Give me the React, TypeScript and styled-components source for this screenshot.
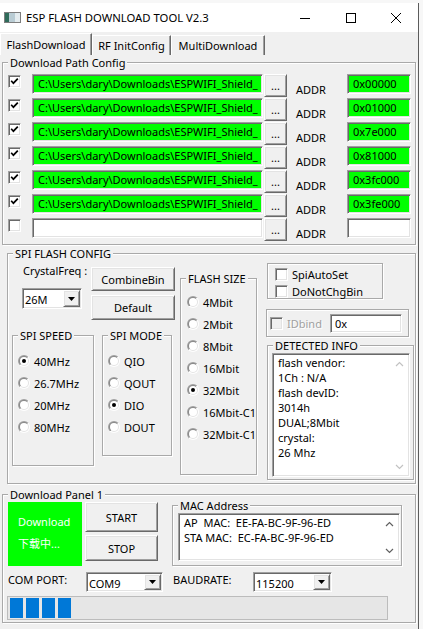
import React from 'react';
import styled, { createGlobalStyle, css } from 'styled-components';

const Global = createGlobalStyle`
  html, body { margin: 0; padding: 0; }
  body {
    background: #f6f6f6;
    font-family: "Noto Sans", "Noto Sans CJK SC", "Liberation Sans", sans-serif;
    font-size: 11px;
    color: #000;
  }
  * { box-sizing: border-box; }
`;

const sunken = css`
  border: 1px solid;
  border-color: #a0a0a0 #ffffff #ffffff #a0a0a0;
  box-shadow: inset 1px 1px 0 #696969, inset -1px -1px 0 #e3e3e3;
`;

const raised = css`
  border: 1px solid;
  border-color: #ffffff #696969 #696969 #ffffff;
  box-shadow: inset 1px 1px 0 #e3e3e3, inset -1px -1px 0 #a0a0a0;
  background: #f0f0f0;
`;

const Screen = styled.div`
  width: 423px;
  height: 629px;
  overflow: hidden;
  padding-top: 3px;
  background: #f7f7f7;
`;

const Window = styled.div`
  width: 419px;
  height: 626px;
  background: #f0f0f0;
  border-right: 1px solid #5c5c5c;
  display: flex;
  flex-direction: column;
`;

const TitleBar = styled.div`
  height: 29px;
  flex: none;
  background: #ffffff;
  display: flex;
  align-items: center;
`;

const AppIcon = styled.svg`
  margin-left: 4px;
  flex: none;
`;

const Title = styled.span`
  margin-left: 5px;
  font-size: 11.3px;
  white-space: nowrap;
`;

const Controls = styled.div`
  margin-left: auto;
  display: flex;
  height: 100%;
`;

const CtrlBtn = styled.div<{ $w: number }>`
  width: ${p => p.$w}px;
  height: 100%;
  display: flex;
  align-items: center;
  justify-content: center;
`;

const TabBar = styled.div`
  height: 23px;
  flex: none;
  display: flex;
  align-items: flex-end;
`;

const Tab = styled.div<{ $w: number; $active?: boolean }>`
  width: ${p => p.$w}px;
  height: ${p => (p.$active ? 22 : 20)}px;
  border-top: 1px solid #ffffff;
  border-left: 1px solid #ffffff;
  border-right: 1px solid #696969;
  box-shadow: inset -1px 0 0 #a0a0a0;
  background: #f0f0f0;
  display: flex;
  align-items: center;
  justify-content: center;
  padding-bottom: ${p => (p.$active ? 0 : 0)}px;
  white-space: nowrap;
  margin-top: ${p => (p.$active ? 0 : 2)}px;
`;

const Page = styled.div`
  flex: 1;
  display: flex;
  flex-direction: column;
  align-items: flex-start;
`;

const Group = styled.div<{ $w: number; $h: number; $mt?: number; $ml?: number }>`
  position: relative;
  flex: none;
  width: ${p => p.$w}px;
  height: ${p => p.$h}px;
  margin-top: ${p => p.$mt ?? 0}px;
  margin-left: ${p => p.$ml ?? 0}px;
  border: 1px solid #a9a9a9;
  box-shadow: inset 1px 1px 0 #ffffff, 1px 1px 0 #ffffff;
`;

const Legend = styled.span`
  position: absolute;
  top: -8px;
  left: 5px;
  padding: 0 2px;
  background: #f0f0f0;
  line-height: 15px;
  white-space: nowrap;
`;

const Field = styled.div<{ $w: number; $h: number; $bg?: string; $pl?: number; $ml?: number }>`
  ${sunken};
  flex: none;
  width: ${p => p.$w}px;
  height: ${p => p.$h}px;
  margin-left: ${p => p.$ml ?? 0}px;
  background: ${p => p.$bg ?? '#ffffff'};
  padding-left: ${p => p.$pl ?? 5}px;
  line-height: ${p => p.$h - 2}px;
  white-space: nowrap;
  overflow: hidden;
`;

const Button = styled.button<{ $w: number; $h: number; $ml?: number; $mt?: number }>`
  ${raised};
  flex: none;
  width: ${p => p.$w}px;
  height: ${p => p.$h}px;
  margin: ${p => p.$mt ?? 0}px 0 0 ${p => p.$ml ?? 0}px;
  padding: 0;
  font: inherit;
  color: #000;
  display: flex;
  align-items: center;
  justify-content: center;
`;

const Box = styled.span<{ $checked?: boolean; $disabled?: boolean; $mt?: number }>`
  ${sunken};
  flex: none;
  width: 13px;
  height: 13px;
  margin-top: ${p => p.$mt ?? 0}px;
  background: ${p => (p.$disabled ? '#f0f0f0' : '#ffffff')};
  display: flex;
  align-items: center;
  justify-content: center;
`;

const CheckBox = ({ checked, disabled, mt }: { checked?: boolean; disabled?: boolean; mt?: number }) => (
  <Box $checked={checked} $disabled={disabled} $mt={mt}>
    {checked && (
      <svg width="9" height="9" viewBox="0 0 9 9">
        <path d="M1.2 3.8 L3.4 6.2 L7.8 1.6" fill="none" stroke="#000" strokeWidth="1.7" />
      </svg>
    )}
  </Box>
);

const RadioOuter = styled.span`
  flex: none;
  width: 12px;
  height: 12px;
  border-radius: 50%;
  padding: 1px;
  background: linear-gradient(135deg, #a0a0a0 50%, #ffffff 50%);
`;
const RadioMid = styled.span`
  display: block;
  width: 100%;
  height: 100%;
  border-radius: 50%;
  padding: 1px;
  background: linear-gradient(135deg, #8a8a8a 50%, #e3e3e3 50%);
`;
const RadioInner = styled.span`
  width: 100%;
  height: 100%;
  border-radius: 50%;
  background: #ffffff;
  display: flex;
  align-items: center;
  justify-content: center;
`;
const Dot = styled.span`
  width: 4px;
  height: 4px;
  border-radius: 50%;
  background: #000;
`;

const Radio = ({ checked }: { checked?: boolean }) => (
  <RadioOuter>
    <RadioMid>
      <RadioInner>{checked && <Dot />}</RadioInner>
    </RadioMid>
  </RadioOuter>
);

const PathList = styled.div`
  padding: 11px 0 0 5px;
  display: flex;
  flex-direction: column;
`;

const PathRow = styled.div`
  display: flex;
  align-items: flex-start;
  height: 24px;
`;

const AddrLabel = styled.span`
  flex: none;
  width: 51px;
  margin: 8px 0 0 9px;
  line-height: 15px;
`;

const SpiBody = styled.div`
  display: flex;
  align-items: flex-start;
`;

const ColA = styled.div`
  margin-left: 4px;
  padding-top: 9px;
  width: 163px;
  flex: none;
  display: flex;
  flex-direction: column;
`;

const TopRow = styled.div`
  display: flex;
  align-items: flex-start;
`;

const CrystalBlock = styled.div`
  margin-left: 10px;
  width: 69px;
  display: flex;
  flex-direction: column;
`;

const Label = styled.span<{ $ml?: number; $w?: number; $color?: string }>`
  flex: none;
  line-height: 15px;
  margin-left: ${p => p.$ml ?? 0}px;
  width: ${p => (p.$w ? `${p.$w}px` : 'auto')};
  color: ${p => p.$color ?? '#000'};
  white-space: nowrap;
`;

const ComboBox = styled.div<{ $w: number; $h: number; $mt?: number; $ml?: number }>`
  ${sunken};
  flex: none;
  width: ${p => p.$w}px;
  height: ${p => p.$h}px;
  margin-top: ${p => p.$mt ?? 0}px;
  margin-left: ${p => p.$ml ?? 0}px;
  background: #ffffff;
  display: flex;
  align-items: center;
  padding: 0 1px 0 2px;
`;

const ComboText = styled.span`
  flex: 1;
  padding-top: 2px;
  white-space: nowrap;
`;

const DropBtn = styled.span`
  ${raised};
  width: 17px;
  height: calc(100% - 2px);
  display: flex;
  align-items: center;
  justify-content: center;
`;

const Combo = ({ text, w, h, mt, ml }: { text: string; w: number; h: number; mt?: number; ml?: number }) => (
  <ComboBox $w={w} $h={h} $mt={mt} $ml={ml}>
    <ComboText>{text}</ComboText>
    <DropBtn>
      <svg width="7" height="4" viewBox="0 0 7 4">
        <path d="M0 0 H7 L3.5 4 Z" fill="#000" />
      </svg>
    </DropBtn>
  </ComboBox>
);

const BtnCol = styled.div<{ $mt?: number; $ml?: number }>`
  display: flex;
  flex-direction: column;
  margin-top: ${p => p.$mt ?? 0}px;
  margin-left: ${p => p.$ml ?? 0}px;
  flex: none;
`;

const BottomRow = styled.div`
  margin-top: 15px;
  display: flex;
  align-items: flex-start;
  gap: 8px;
`;

const RadioList = styled.div<{ $pt: number; $pl: number }>`
  padding: ${p => p.$pt}px 0 0 ${p => p.$pl}px;
  display: flex;
  flex-direction: column;
`;

const RadioRow = styled.div`
  height: 22px;
  display: flex;
  align-items: center;
  gap: 4px;
  white-space: nowrap;
`;

const ColC = styled.div`
  margin-left: 9px;
  margin-top: 9px;
  display: flex;
  flex-direction: column;
  align-items: flex-start;
`;

const Panel = styled.div<{ $w: number; $h: number; $mt?: number; $ml?: number }>`
  flex: none;
  width: ${p => p.$w}px;
  height: ${p => p.$h}px;
  margin-top: ${p => p.$mt ?? 0}px;
  margin-left: ${p => p.$ml ?? 0}px;
  border: 1px solid #a9a9a9;
  box-shadow: inset 1px 1px 0 #ffffff, 1px 1px 0 #ffffff;
`;

const OptList = styled.div`
  padding: 2px 0 0 7px;
  display: flex;
  flex-direction: column;
`;

const OptRow = styled.div`
  height: 17px;
  display: flex;
  align-items: center;
  gap: 4px;
  white-space: nowrap;
`;

const IdRow = styled.div`
  height: 100%;
  display: flex;
  align-items: center;
  padding-left: 3px;
`;

const DisabledText = styled.span`
  margin-left: 4px;
  width: 43px;
  flex: none;
  color: #a0a0a0;
  text-shadow: 1px 1px 0 #ffffff;
`;

const TextArea = styled.div<{ $w: number; $h: number; $mt: number; $ml: number }>`
  ${sunken};
  width: ${p => p.$w}px;
  height: ${p => p.$h}px;
  margin: ${p => p.$mt}px 0 0 ${p => p.$ml}px;
  background: #ffffff;
  display: flex;
  padding: 1px;
`;

const TextLines = styled.div`
  flex: 1;
  padding: 0 0 0 4px;
  line-height: 15px;
  white-space: pre;
  overflow: hidden;
`;

const ScrollBar = styled.div`
  width: 17px;
  flex: none;
  display: flex;
  flex-direction: column;
  justify-content: space-between;
`;

const ScrollArrow = styled.div`
  height: 17px;
  display: flex;
  align-items: center;
  justify-content: center;
`;

const Chevron = ({ up, color }: { up?: boolean; color: string }) => (
  <svg width="9" height="6" viewBox="0 0 9 6">
    <path d={up ? 'M1 5 L4.5 1.5 L8 5' : 'M1 1 L4.5 4.5 L8 1'} fill="none" stroke={color} strokeWidth="1.2" />
  </svg>
);

const DlRow = styled.div`
  display: flex;
  align-items: flex-start;
  margin-top: 7px;
  padding-left: 5px;
`;

const StatusBox = styled.div`
  width: 74px;
  height: 64px;
  flex: none;
  background: #00ff00;
  color: #ffffff;
  padding: 9px 0 0 10px;
  line-height: 22px;
  white-space: nowrap;
`;

const PortRow = styled.div`
  display: flex;
  align-items: flex-start;
  margin-top: 6px;
  padding-left: 5px;
`;

const Progress = styled.div`
  margin: 4px 0 0 4px;
  width: 381px;
  height: 24px;
  border: 1px solid #bcbcbc;
  background: #e6e6e6;
  padding: 1px 2px;
  display: flex;
  gap: 3px;
`;

const ProgressBlock = styled.span`
  width: 13px;
  height: 100%;
  background: #0078d7;
`;

const PATH = 'C:\\Users\\dary\\Downloads\\ESPWIFI_Shield_';
const rows = [
  { on: true, path: PATH, addr: '0x00000' },
  { on: true, path: PATH, addr: '0x01000' },
  { on: true, path: PATH, addr: '0x7e000' },
  { on: true, path: PATH, addr: '0x81000' },
  { on: true, path: PATH, addr: '0x3fc000' },
  { on: true, path: PATH, addr: '0x3fe000' },
  { on: false, path: '', addr: '' },
];

const speeds = [
  { t: '40MHz', on: true },
  { t: '26.7MHz' },
  { t: '20MHz' },
  { t: '80MHz' },
];
const modes = [{ t: 'QIO' }, { t: 'QOUT' }, { t: 'DIO', on: true }, { t: 'DOUT' }];
const sizes = [
  { t: '4Mbit' },
  { t: '2Mbit' },
  { t: '8Mbit' },
  { t: '16Mbit' },
  { t: '32Mbit', on: true },
  { t: '16Mbit-C1' },
  { t: '32Mbit-C1' },
];

const detected = ['flash vendor:', '1Ch : N/A', 'flash devID:', '3014h', 'DUAL;8Mbit', 'crystal:', '26 Mhz'];

export default function App() {
  return (
    <>
      <Global />
      <Screen>
        <Window>
          <TitleBar>
            <AppIcon width="17" height="11" viewBox="0 0 17 11">
              <rect x="0.5" y="0.5" width="16" height="10" fill="#e4ecef" stroke="#7d7d7d" />
              <rect x="1" y="1" width="4" height="9" fill="#2f6b5a" />
              <rect x="5" y="1" width="6" height="9" fill="#b9ccd4" />
            </AppIcon>
            <Title>ESP FLASH DOWNLOAD TOOL V2.3</Title>
            <Controls>
              <CtrlBtn $w={46}>
                <svg width="10" height="10" viewBox="0 0 10 10">
                  <path d="M0 5.5 H10" stroke="#000" strokeWidth="1" />
                </svg>
              </CtrlBtn>
              <CtrlBtn $w={46}>
                <svg width="10" height="10" viewBox="0 0 10 10">
                  <rect x="0.5" y="0.5" width="9" height="9" fill="none" stroke="#000" strokeWidth="1" />
                </svg>
              </CtrlBtn>
              <CtrlBtn $w={44}>
                <svg width="10" height="10" viewBox="0 0 10 10">
                  <path d="M0 0 L10 10 M10 0 L0 10" stroke="#000" strokeWidth="1" />
                </svg>
              </CtrlBtn>
            </Controls>
          </TitleBar>

          <TabBar>
            <Tab $w={92} $active>FlashDownload</Tab>
            <Tab $w={79}>RF InitConfig</Tab>
            <Tab $w={94}>MultiDownload</Tab>
          </TabBar>

          <Page>
            <Group $w={414} $h={183} $mt={7} $ml={2}>
              <Legend>Download Path Config</Legend>
              <PathList>
                {rows.map((r, i) => (
                  <PathRow key={i}>
                    <CheckBox checked={r.on} mt={1} />
                    <Field $w={231} $h={20} $ml={11} $bg={r.on ? '#00ff00' : '#ffffff'}>
                      {r.path}
                    </Field>
                    <Button $w={23} $h={23} $ml={1}>...</Button>
                    <AddrLabel>ADDR</AddrLabel>
                    <Field $w={64} $h={20} $bg={r.on ? '#00ff00' : '#ffffff'}>
                      {r.addr}
                    </Field>
                  </PathRow>
                ))}
              </PathList>
            </Group>

            <Group $w={409} $h={231} $mt={8} $ml={7}>
              <Legend>SPI FLASH CONFIG</Legend>
              <SpiBody>
                <ColA>
                  <TopRow>
                    <CrystalBlock>
                      <Label $ml={1}>CrystalFreq :</Label>
                      <Combo text="26M" w={60} h={21} mt={10} />
                    </CrystalBlock>
                    <BtnCol $mt={4}>
                      <Button $w={84} $h={24}>CombineBin</Button>
                      <Button $w={84} $h={25} $mt={4}>Default</Button>
                    </BtnCol>
                  </TopRow>
                  <BottomRow>
                    <Group $w={82} $h={131}>
                      <Legend>SPI SPEED</Legend>
                      <RadioList $pt={14} $pl={5}>
                        {speeds.map(s => (
                          <RadioRow key={s.t}>
                            <Radio checked={s.on} />
                            <span>{s.t}</span>
                          </RadioRow>
                        ))}
                      </RadioList>
                    </Group>
                    <Group $w={70} $h={121}>
                      <Legend>SPI MODE</Legend>
                      <RadioList $pt={14} $pl={5}>
                        {modes.map(s => (
                          <RadioRow key={s.t}>
                            <Radio checked={s.on} />
                            <span>{s.t}</span>
                          </RadioRow>
                        ))}
                      </RadioList>
                    </Group>
                  </BottomRow>
                </ColA>

                <Group $w={77} $h={197} $mt={24} $ml={5}>
                  <Legend>FLASH SIZE</Legend>
                  <RadioList $pt={12} $pl={6}>
                    {sizes.map(s => (
                      <RadioRow key={s.t}>
                        <Radio checked={s.on} />
                        <span>{s.t}</span>
                      </RadioRow>
                    ))}
                  </RadioList>
                </Group>

                <ColC>
                  <Panel $w={116} $h={36} $ml={1}>
                    <OptList>
                      <OptRow>
                        <CheckBox />
                        <span>SpiAutoSet</span>
                      </OptRow>
                      <OptRow>
                        <CheckBox />
                        <span>DoNotChgBin</span>
                      </OptRow>
                    </OptList>
                  </Panel>
                  <Panel $w={143} $h={28} $mt={10}>
                    <IdRow>
                      <CheckBox disabled />
                      <DisabledText>IDbind</DisabledText>
                      <Field $w={72} $h={19} $pl={4}>0x</Field>
                    </IdRow>
                  </Panel>
                  <Group $w={147} $h={135} $mt={8} $ml={1}>
                    <Legend>DETECTED INFO</Legend>
                    <TextArea $w={138} $h={124} $mt={7} $ml={4}>
                      <TextLines>{detected.join('\n')}</TextLines>
                      <ScrollBar>
                        <ScrollArrow><Chevron up color="#c2c2c2" /></ScrollArrow>
                        <ScrollArrow><Chevron color="#c2c2c2" /></ScrollArrow>
                      </ScrollBar>
                    </TextArea>
                  </Group>
                </ColC>
              </SpiBody>
            </Group>

            <Group $w={414} $h={129} $mt={10} $ml={2}>
              <Legend>Download Panel 1</Legend>
              <DlRow>
                <StatusBox>
                  Download
                  <br />
                  下载中...
                </StatusBox>
                <BtnCol $ml={3}>
                  <Button $w={73} $h={30}>START</Button>
                  <Button $w={73} $h={26} $mt={3}>STOP</Button>
                </BtnCol>
                <Group $w={230} $h={61} $mt={3} $ml={14}>
                  <Legend>MAC Address</Legend>
                  <TextArea $w={222} $h={48} $mt={7} $ml={5}>
                    <TextLines>{'AP  MAC:  EE-FA-BC-9F-96-ED\nSTA MAC:  EC-FA-BC-9F-96-ED'}</TextLines>
                    <ScrollBar>
                      <ScrollArrow><Chevron up color="#606060" /></ScrollArrow>
                      <ScrollArrow><Chevron color="#606060" /></ScrollArrow>
                    </ScrollBar>
                  </TextArea>
                </Group>
              </DlRow>
              <PortRow>
                <Label $w={78}>COM PORT:</Label>
                <Combo text="COM9" w={77} h={20} />
                <Label $w={80} $ml={10}>BAUDRATE:</Label>
                <Combo text="115200" w={79} h={20} />
              </PortRow>
              <Progress>
                {[0, 1, 2, 3].map(i => (
                  <ProgressBlock key={i} />
                ))}
              </Progress>
            </Group>
          </Page>
        </Window>
      </Screen>
    </>
  );
}
